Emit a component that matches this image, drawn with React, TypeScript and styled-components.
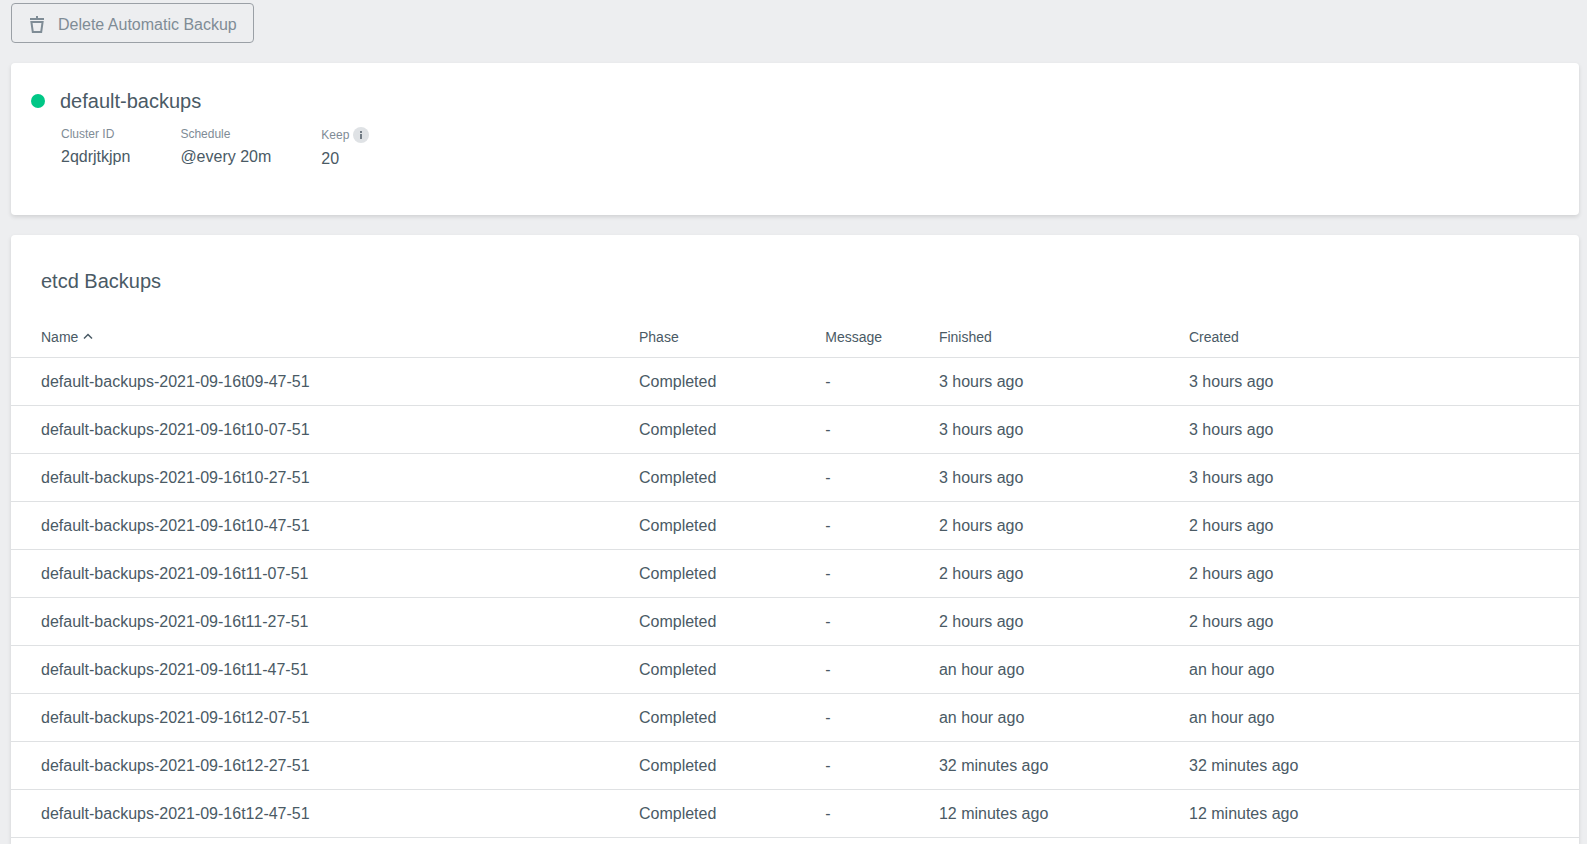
import React from "react";
import styled, { createGlobalStyle } from "styled-components";

const color = {
  page: "#edeef0",
  card: "#ffffff",
  text: "#4a5a65",
  muted: "#7f8c96",
  line: "#dfe1e3",
  outline: "#9ba0a6",
  healthy: "#00c786",
};

const GlobalStyle = createGlobalStyle`
  * {
    box-sizing: border-box;
  }
  body {
    margin: 0;
    background: ${color.page};
    color: ${color.text};
    font-family: "Liberation Sans", Arial, sans-serif;
    font-size: 16px;
    line-height: 24px;
  }
`;

const Page = styled.main`
  display: flex;
  flex-direction: column;
  gap: 20px;
  min-height: 100vh;
  padding: 3px 8px 0 11px;
`;

const DeleteButton = styled.button`
  display: flex;
  align-items: center;
  gap: 12px;
  align-self: flex-start;
  height: 40px;
  padding: 4px 16px 0;
  border: 1px solid ${color.outline};
  border-radius: 4px;
  background: transparent;
  color: ${color.muted};
  font: inherit;
  cursor: pointer;
`;

const Card = styled.section`
  border-radius: 4px;
  background: ${color.card};
  box-shadow: 0 2px 4px rgba(0, 0, 0, 0.12);
`;

const SummaryCard = styled(Card)`
  padding: 26px 20px 44px;
`;

const ListCard = styled(Card)`
  flex: 1;
  border-radius: 4px 4px 0 0;
`;

const TitleRow = styled.div`
  display: flex;
  align-items: center;
  gap: 15px;
`;

const StatusDot = styled.span`
  width: 14px;
  height: 14px;
  border-radius: 50%;
  background: ${color.healthy};
`;

const Title = styled.h1`
  margin: 0;
  font-size: 20px;
  font-weight: 400;
  line-height: 24px;
`;

const ListTitle = styled(Title).attrs({ as: "h2" })`
  padding: 34px 30px 24px;
`;

const Properties = styled.dl`
  display: flex;
  gap: 50px;
  margin: 14px 0 0;
  padding-left: 30px;
`;

const Label = styled.dt`
  display: flex;
  align-items: center;
  gap: 4px;
  color: ${color.muted};
  font-size: 12px;
  line-height: 14px;
`;

const Value = styled.dd`
  margin: 4px 0 0;
`;

const Table = styled.table`
  width: 100%;
  table-layout: fixed;
  border-collapse: separate;
  border-spacing: 0;
`;

const Column = styled.col<{ $share?: string }>`
  width: ${({ $share }) => $share ?? "auto"};
`;

const HeaderCell = styled.th`
  height: 41px;
  padding: 0;
  border-bottom: 1px solid ${color.line};
  font-size: 14px;
  font-weight: 400;
  text-align: left;

  &:first-child {
    padding-left: 30px;
  }
`;

const Cell = styled.td`
  height: 48px;
  padding: 0;
  border-bottom: 1px solid ${color.line};

  &:first-child {
    padding-left: 30px;
  }
`;

const SortButton = styled.button`
  display: flex;
  align-items: center;
  gap: 5px;
  padding: 0;
  border: 0;
  background: none;
  color: inherit;
  font: inherit;
  cursor: pointer;
`;

const TrashIcon = () => (
  <svg width="18" height="18" viewBox="0 0 18 18" fill="none" aria-hidden="true">
    <path d="M8 0h2v2h6v2H2V2h6z" fill="currentColor" />
    <path d="M3.4 6h11.2L13.2 16H4.8z" stroke="currentColor" strokeWidth="2" />
  </svg>
);

const InfoIcon = () => (
  <svg width="16" height="16" viewBox="0 0 16 16" role="img" aria-label="Info">
    <circle cx="8" cy="8" r="8" fill="#dfe2e5" />
    <path d="M7 4h2v2H7zM7 7h2v5H7z" fill="#717b84" />
  </svg>
);

const SortIcon = () => (
  <svg width="10" height="8" viewBox="0 0 10 8" fill="none" aria-hidden="true">
    <path d="M1 5.5L5 1.5l4 4" stroke="currentColor" strokeWidth="1.5" />
  </svg>
);

const backups = [
  ["09-47-51", "3 hours ago"],
  ["10-07-51", "3 hours ago"],
  ["10-27-51", "3 hours ago"],
  ["10-47-51", "2 hours ago"],
  ["11-07-51", "2 hours ago"],
  ["11-27-51", "2 hours ago"],
  ["11-47-51", "an hour ago"],
  ["12-07-51", "an hour ago"],
  ["12-27-51", "32 minutes ago"],
  ["12-47-51", "12 minutes ago"],
].map(([time, age]) => ({
  name: `default-backups-2021-09-16t${time}`,
  phase: "Completed",
  message: "-",
  finished: age,
  created: age,
}));

export default function App() {
  return (
    <>
      <GlobalStyle />
      <Page>
        <DeleteButton type="button">
          <TrashIcon />
          Delete Automatic Backup
        </DeleteButton>

        <SummaryCard>
          <TitleRow>
            <StatusDot />
            <Title>default-backups</Title>
          </TitleRow>
          <Properties>
            <div>
              <Label>Cluster ID</Label>
              <Value>2qdrjtkjpn</Value>
            </div>
            <div>
              <Label>Schedule</Label>
              <Value>@every 20m</Value>
            </div>
            <div>
              <Label>
                Keep
                <InfoIcon />
              </Label>
              <Value>20</Value>
            </div>
          </Properties>
        </SummaryCard>

        <ListCard>
          <ListTitle>etcd Backups</ListTitle>
          <Table>
            <colgroup>
              <Column $share="40.05%" />
              <Column $share="11.88%" />
              <Column $share="7.25%" />
              <Column $share="15.95%" />
              <Column />
            </colgroup>
            <thead>
              <tr>
                <HeaderCell aria-sort="ascending">
                  <SortButton type="button">
                    Name
                    <SortIcon />
                  </SortButton>
                </HeaderCell>
                <HeaderCell>Phase</HeaderCell>
                <HeaderCell>Message</HeaderCell>
                <HeaderCell>Finished</HeaderCell>
                <HeaderCell>Created</HeaderCell>
              </tr>
            </thead>
            <tbody>
              {backups.map((backup) => (
                <tr key={backup.name}>
                  <Cell>{backup.name}</Cell>
                  <Cell>{backup.phase}</Cell>
                  <Cell>{backup.message}</Cell>
                  <Cell>{backup.finished}</Cell>
                  <Cell>{backup.created}</Cell>
                </tr>
              ))}
            </tbody>
          </Table>
        </ListCard>
      </Page>
    </>
  );
}
